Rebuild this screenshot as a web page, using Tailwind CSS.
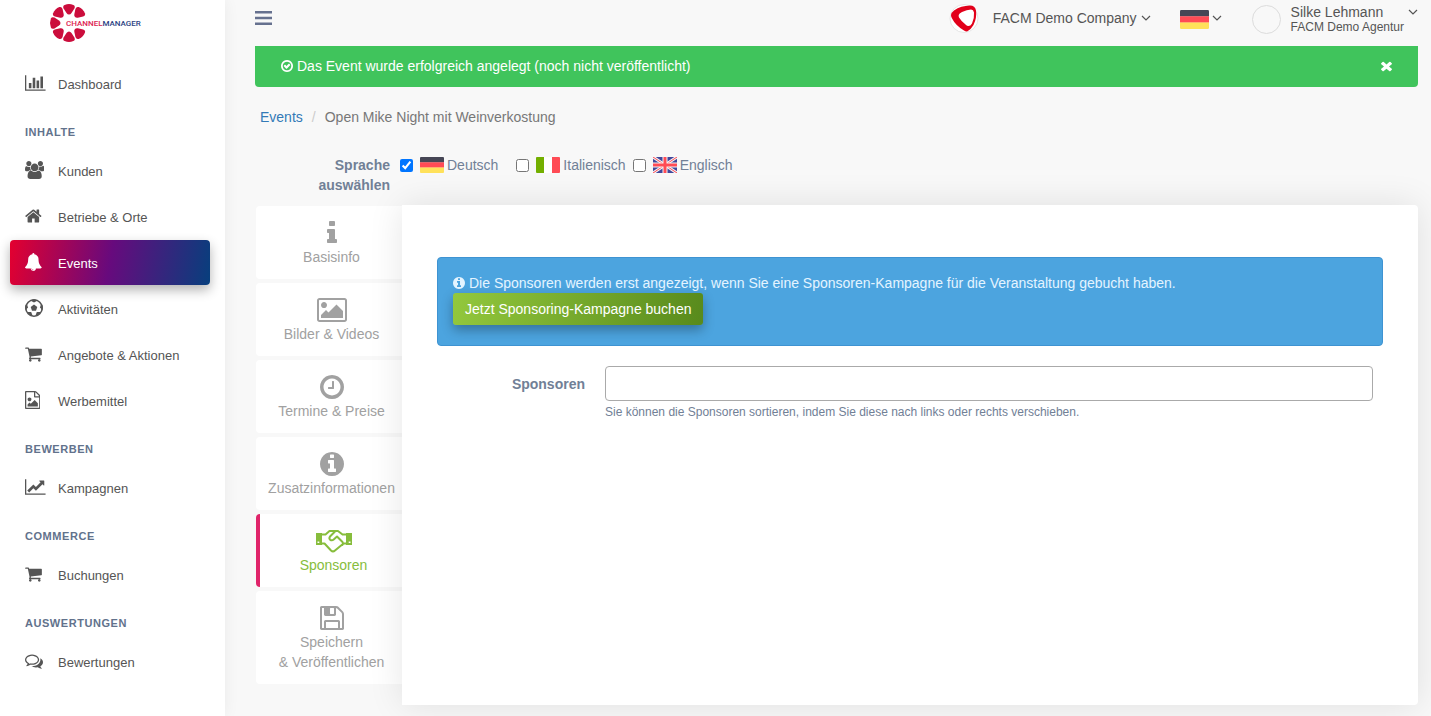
<!DOCTYPE html>
<html lang="de">

<head>
    <meta charset="UTF-8">
    <meta name="viewport" content="width=device-width, initial-scale=1.0">
    <title>Channelmanager - Event Sponsoren</title>
    <script src="https://cdn.jsdelivr.net/npm/@tailwindcss/browser@4"></script>
</head>

<body class="flex min-h-screen bg-[#f8f8f8] font-['Liberation_Sans',Arial,sans-serif] text-sm leading-5 text-[#555]">

    <!-- icons -->
    <svg class="hidden" xmlns="http://www.w3.org/2000/svg">
        <symbol id="i-cart" viewBox="64 0 1664 1792"><path d="M704 1536q0 52-38 90t-90 38-90-38-38-90 38-90 90-38 90 38 38 90zm896 0q0 52-38 90t-90 38-90-38-38-90 38-90 90-38 90 38 38 90zm128-1088v512q0 24-16.500 42.500t-40.500 21.500l-1044 122q13 60 13 70 0 16-24 64h920q26 0 45 19t19 45-19 45-45 19h-1024q-26 0-45-19t-19-45q0-11 8-31.500t16-36 21.500-40 15.500-29.500l-177-823h-204q-26 0-45-19t-19-45 19-45 45-19h256q16 0 28.500 6.500t19.500 15.500 13 24.500 8 26 5.500 29.500 4.500 26h1201q26 0 45 19t19 45z"/></symbol>
        <symbol id="i-info-circle" viewBox="128 0 1536 1792"><path d="M1152 1376v-160q0-14-9-23t-23-9h-96v-512q0-14-9-23t-23-9h-320q-14 0-23 9t-9 23v160q0 14 9 23t23 9h96v320h-96q-14 0-23 9t-9 23v160q0 14 9 23t23 9h448q14 0 23-9t9-23zm-128-896v-160q0-14-9-23t-23-9h-192q-14 0-23 9t-9 23v160q0 14 9 23t23 9h192q14 0 23-9t9-23zm640 416q0 209-103 385.500t-279.500 279.500-385.500 103-385.500-103-279.500-279.500-103-385.500 103-385.500 279.500-279.500 385.500-103 385.500 103 279.500 279.500 103 385.500z"/></symbol>
        <symbol id="i-chevron" viewBox="0 0 10 6"><path d="M1 1l4 4 4-4" fill="none" stroke="currentColor" stroke-width="1.200"/></symbol>
        <symbol id="i-flag-de" viewBox="0 0 24 16" preserveAspectRatio="none"><path fill="#464655" d="M0 1q0-1 1-1h22q1 0 1 1v4.400H0z"/><path fill="#ff4b55" d="M0 5.300h24v5.400H0z"/><path fill="#ffe15a" d="M0 10.600h24V15q0 1-1 1H1q-1 0-1-1z"/></symbol>
    </svg>

    <aside class="z-10 w-[225px] shrink-0 bg-white pl-[10px] pr-[15px] shadow-[0_0_15px_rgba(0,0,0,0.06)]">
        <a href="#" class="mb-[18px] ml-[39px] block h-[43px]" aria-label="Channelmanager">
            <svg class="h-[43px] w-[100px]" viewBox="0 0 100 43">
                <defs>
                    <path id="petal" d="M20 14.500q-1.500 0-2.500-1.500L14.600 8.500q-1.200-2.600 1-3.600 4.400-1.800 8.800 0 2.200 1 1 3.600L22.500 13q-1 1.500-2.500 1.500z"/>
                </defs>
                <g fill="#cb0d3c">
                    <use href="#petal"/>
                    <use href="#petal" transform="rotate(45 20 23)"/>
                    <use href="#petal" transform="rotate(135 20 23)"/>
                    <use href="#petal" transform="rotate(180 20 23)"/>
                    <use href="#petal" transform="rotate(225 20 23)"/>
                    <use href="#petal" transform="rotate(270 20 23)"/>
                    <use href="#petal" transform="rotate(315 20 23)"/>
                </g>
                <text x="17" y="26" class="font-[Roboto,sans-serif] text-[8px] font-medium" fill="#dc2350">CHANNEL<tspan fill="#2b4383">MANAGER</tspan></text>
            </svg>
        </a>
        <nav class="text-[13px]">
            <a href="#" class="mb-px flex h-[45px] items-center pl-[15px] pt-[2px]">
                <span class="mb-1 w-[33px]"><svg class="h-[18px] fill-current" viewBox="0 0 2048 1792"><path d="M640 896v512h-256v-512h256zm384-512v1024h-256v-1024h256zm1024 1152v128h-2048v-1536h128v1408h1920zm-640-896v768h-256v-768h256zm384-384v1152h-256v-1152h256z"/></svg></span>
                Dashboard
            </a>
            <h3 class="h-[41px] pl-[15px] pt-[17px] text-[11px] font-bold leading-4 tracking-wider text-[#62728c]">INHALTE</h3>
            <a href="#" class="mb-px flex h-[45px] items-center pl-[15px] pt-[2px]">
                <span class="mb-1 w-[33px]"><svg class="h-[18px] fill-current" viewBox="0 0 1920 1792"><path d="M593 896q-162 5-265 128h-134q-82 0-138-40.500t-56-118.500q0-353 124-353 6 0 43.500 21t97.500 42.500 119 21.500q67 0 133-23-5 37-5 66 0 159 93 293zm1071 637q0 120-73 189.500t-194 69.500h-874q-121 0-194-69.500t-73-189.500q0-53 3.500-103.500t14-109 26.500-108.500 43-97.500 62-81 85.500-53.500 111.500-20q10 0 43 21.500t73 48 107 48 135 21.500 135-21.500 107-48 73-48 43-21.500q61 0 111.500 20t85.500 53.500 62 81 43 97.500 26.500 108.500 14 109 3.500 103.500zm-1024-1277q0 106-75 181t-181 75-181-75-75-181 75-181 181-75 181 75 75 181zm704 384q0 159-112.500 271.500t-271.500 112.500-271.500-112.500-112.500-271.500 112.500-271.500 271.500-112.500 271.500 112.500 112.500 271.500zm576 225q0 78-56 118.500t-138 40.500h-134q-103-123-265-128 93-134 93-293 0-29-5-66 66 23 133 23 59 0 119-21.500t97.500-42.500 43.500-21q124 0 124 353zm-128-609q0 106-75 181t-181 75-181-75-75-181 75-181 181-75 181 75 75 181z"/></svg></span>
                Kunden
            </a>
            <a href="#" class="mb-px flex h-[45px] items-center pl-[15px] pt-[2px]">
                <span class="mb-1 w-[33px]"><svg class="h-[18px] fill-current" viewBox="64 0 1664 1792"><path d="M1472 992v480q0 26-19 45t-45 19h-384v-384h-256v384h-384q-26 0-45-19t-19-45v-480q0-1 .5-3t.5-3l575-474 575 474q1 2 1 6zm223-69l-62 74q-8 9-21 11h-3q-13 0-21-7l-692-577-692 577q-12 8-24 7-13-2-21-11l-62-74q-8-10-7-23.500t11-21.500l719-599q32-26 76-26t76 26l244 204v-195q0-14 9-23t23-9h192q14 0 23 9t9 23v408l219 182q10 8 11 21.500t-7 23.500z"/></svg></span>
                Betriebe &amp; Orte
            </a>
            <a href="#" class="mb-px flex h-[45px] items-center rounded bg-linear-[100deg,#e4002f,#670a7d_50%,#073f7d] pl-[15px] pt-[2px] text-white shadow-[0_5px_12px_rgba(0,0,0,0.3)]">
                <span class="mb-1 w-[33px]"><svg class="h-[18px] fill-current" viewBox="64 0 1664 1792"><path d="M912 1696q0-16-16-16-59 0-101.500-42.500t-42.500-101.500q0-16-16-16t-16 16q0 73 51.500 124.500t124.500 51.500q16 0 16-16zm816-288q0 52-38 90t-90 38h-448q0 106-75 181t-181 75-181-75-75-181h-448q-52 0-90-38t-38-90q50-42 91-88t85-119.500 74.500-158.500 50-206 19.500-260q0-152 117-282.500t307-158.500q-8-19-8-39 0-40 28-68t68-28 68 28 28 68q0 20-8 39 190 28 307 158.500t117 282.500q0 139 19.500 260t50 206 74.500 158.500 85 119.500 91 88z"/></svg></span>
                Events
            </a>
            <a href="#" class="mb-px flex h-[45px] items-center pl-[15px] pt-[2px]">
                <span class="mb-1 w-[33px]"><svg class="h-[18px] fill-current" viewBox="0 0 18 18"><circle cx="9" cy="9" r="8.200" fill="none" stroke="currentColor" stroke-width="1.600"/><path d="M9 5.600l3.300 2.400-1.300 3.800H7L5.700 8zM5.200 1.600L9 3.600l3.800-2L10.500.5h-3zM16.400 4.400l-1.500 4.200 2.700 2.600.2-4zM1.600 4.400l1.500 4.200-2.700 2.600-.2-4zM16 12.900l-4.200.2-1.500 3.900 3.300-.8zM2 12.900l4.200.2 1.500 3.900-3.300-.8z"/></svg></span>
                Aktivitäten
            </a>
            <a href="#" class="mb-px flex h-[45px] items-center pl-[15px] pt-[2px]">
                <span class="mb-1 w-[33px]"><svg class="h-[18px] w-[17px] fill-current"><use href="#i-cart"/></svg></span>
                Angebote &amp; Aktionen
            </a>
            <a href="#" class="mb-px flex h-[45px] items-center pl-[15px] pt-[2px]">
                <span class="mb-1 w-[33px]"><svg class="h-[18px] fill-current" viewBox="128 0 1536 1792"><path d="M1596 380q28 28 48 76t20 88v1152q0 40-28 68t-68 28h-1344q-40 0-68-28t-28-68v-1600q0-40 28-68t68-28h896q40 0 88 20t76 48zm-444-244v376h376q-10-29-22-41l-313-313q-12-12-41-22zm384 1528v-1024h-416q-40 0-68-28t-28-68v-416h-768v1536h1280zm-128-448v320h-1024v-192l192-192 128 128 384-384zm-832-192q-80 0-136-56t-56-136 56-136 136-56 136 56 56 136-56 136-136 56z"/></svg></span>
                Werbemittel
            </a>
            <h3 class="h-[41px] pl-[15px] pt-[17px] text-[11px] font-bold leading-4 tracking-wider text-[#62728c]">BEWERBEN</h3>
            <a href="#" class="mb-px flex h-[45px] items-center pl-[15px] pt-[2px]">
                <span class="mb-1 w-[33px]"><svg class="h-[18px] fill-current" viewBox="0 0 2048 1792"><path d="M2048 1536v128h-2048v-1536h128v1408h1920zm-128-1248v435q0 21-19.500 29.500t-35.500-7.500l-121-121-633 633q-10 10-23 10t-23-10l-233-233-416 416-192-192 585-585q10-10 23-10t23 10l233 233 464-464-121-121q-16-16-7.500-35.500t29.500-19.500h435q14 0 23 9t9 23z"/></svg></span>
                Kampagnen
            </a>
            <h3 class="h-[41px] pl-[15px] pt-[17px] text-[11px] font-bold leading-4 tracking-wider text-[#62728c]">COMMERCE</h3>
            <a href="#" class="mb-px flex h-[45px] items-center pl-[15px] pt-[2px]">
                <span class="mb-1 w-[33px]"><svg class="h-[18px] w-[17px] fill-current"><use href="#i-cart"/></svg></span>
                Buchungen
            </a>
            <h3 class="h-[41px] pl-[15px] pt-[17px] text-[11px] font-bold leading-4 tracking-wider text-[#62728c]">AUSWERTUNGEN</h3>
            <a href="#" class="mb-px flex h-[45px] items-center pl-[15px] pt-[2px]">
                <span class="mb-1 w-[33px]"><svg class="h-[18px] fill-current" viewBox="0 0 1792 1792"><path d="M704 384q-153 0-286 52t-211.500 141-78.500 191q0 82 53 158t149 132l97 56-35 84q34-20 62-39l44-31 53 10q78 14 153 14 153 0 286-52t211.500-141 78.500-191-78.500-191-211.500-141-286-52zm0-128q191 0 353.500 68.500t256.500 186.500 94 257-94 257-256.500 186.500-353.500 68.500q-86 0-176-16-124 88-278 128-36 9-86 16h-3q-11 0-20.500-8t-11.500-21q-1-3-1-6.500t.5-6.500 2-6l2.500-5 3.500-5.500 4-5 4.500-5 4-4.500q5-6 23-25t26-29.500 22.500-29 25-38.500 20.500-44q-124-72-195-177t-71-224q0-139 94-257t256.500-186.500 353.500-68.500zm822 1169q10 24 20.500 44t25 38.500 22.500 29 26 29.500 23 25q1 1 4 4.500t4.500 5 4 5 3.500 5.500l2.500 5 2 6 .5 6.500-1 6.500q-3 14-13 22t-22 7q-50-7-86-16-154-40-278-128-90 16-176 16-271 0-472-132 58 4 88 4 161 0 309-45t264-129q125-92 192-212t67-254q0-77-23-152 129 71 204 178t75 230q0 120-71 224.500t-195 176.500z"/></svg></span>
                Bewertungen
            </a>
        </nav>
    </aside>

    <div class="min-w-0 flex-1 pb-[11px] pl-[30px] pr-[13px]">
        <header class="flex h-[46px] items-start">
            <button type="button" class="mt-[11px] text-[#66718f]" aria-label="Menü">
                <svg class="h-[14px] w-[17px] fill-current" viewBox="0 0 17 14"><path d="M0 0h17v2.600H0zM0 5.700h17v2.600H0zM0 11.400h17V14H0z"/></svg>
            </button>
            <button type="button" class="ml-auto flex h-[36px] items-center">
                <svg class="mr-[14px] size-[30px]" viewBox="0 0 30 30">
                    <circle cx="15" cy="15.500" r="14" fill="#fff" stroke="#e6e6e6"/>
                    <path fill="#e2001a" d="M2 12Q2.300 9.500 5 7.500Q12 2.800 21 2.600Q26 2.600 27 7.500Q28 15 24.500 22Q21.500 27 18.500 28.300Q17 28.800 15 27.500Q6.500 22.500 2.800 15Q2 13.500 2 12z"/>
                    <path fill="#fff" d="M9.700 12Q10 10.500 13 9Q18 6.500 22 6.500Q24.500 6.700 25 9.500Q25.500 15.500 23 20.500Q21.500 23 19.500 23Q18 23 16.500 21.500Q12.500 18.500 10 14.500Q9.500 13 9.700 12z"/>
                </svg>
                FACM Demo Company
                <svg class="ml-1 h-[6px] w-[10px]"><use href="#i-chevron"/></svg>
            </button>
            <button type="button" class="ml-[29px] flex h-[36px] items-center" aria-label="Sprache">
                <svg class="mt-[2px] h-[19px] w-[29px]"><use href="#i-flag-de"/></svg>
                <svg class="ml-[3px] h-[6px] w-[10px]"><use href="#i-chevron"/></svg>
            </button>
            <button type="button" class="ml-[30px] flex items-start text-left">
                <span class="mr-[10px] mt-[5px] size-[29px] rounded-full border border-[#dcdcdc]"></span>
                <span class="pt-1">
                    <span class="block leading-4">Silke Lehmann</span>
                    <span class="block text-xs leading-[14px]">FACM Demo Agentur</span>
                </span>
                <svg class="ml-1 mt-[9px] h-[6px] w-[10px]"><use href="#i-chevron"/></svg>
            </button>
        </header>

        <main>
            <div role="alert" class="flex h-[41px] items-center rounded-b bg-[#40c45c] px-[26px] pb-[2px] text-white">
                <svg class="mr-1 h-[14px] w-[12px] fill-current" viewBox="128 0 1536 1792"><path d="M1299 813l-422 422q-19 19-45 19t-45-19l-294-294q-19-19-19-45t19-45l102-102q19-19 45-19t45 19l147 147 275-275q19-19 45-19t45 19l102 102q19 19 19 45t-19 45zm141 83q0-148-73-273t-198-198-273-73-273 73-198 198-73 273 73 273 198 198 273 73 273-73 198-198 73-273zm224 0q0 209-103 385.500t-279.500 279.500-385.500 103-385.500-103-279.500-279.500-103-385.500 103-385.500 279.500-279.500 385.500-103 385.500 103 279.500 279.500 103 385.500z"/></svg>
                Das Event wurde erfolgreich angelegt (noch nicht veröffentlicht)
                <button type="button" class="ml-auto" aria-label="Schließen">
                    <svg class="h-[14px] w-[11px] fill-current" viewBox="302 0 1188 1792" preserveAspectRatio="none"><path d="M1490 1322q0 40-28 68l-136 136q-28 28-68 28t-68-28l-294-294-294 294q-28 28-68 28t-68-28l-136-136q-28-28-28-68t28-68l294-294-294-294q-28-28-28-68t28-68l136-136q28-28 68-28t68 28l294 294 294-294q28-28 68-28t68 28l136 136q28 28 28 68t-28 68l-294 294 294 294q28 28 28 68z"/></svg>
                </button>
            </div>

            <ol class="flex px-[5px] py-5 text-[#777]">
                <li><a href="#" class="text-[#337ab7]">Events</a></li>
                <li class="px-[9px] text-[#ccc]">/</li>
                <li>Open Mike Night mit Weinverkostung</li>
            </ol>

            <fieldset class="mt-2 flex text-[#718096]">
                <legend class="float-left w-[135px] pl-5 text-right font-bold">Sprache auswählen</legend>
                <div class="ml-[10px] flex h-5 items-center">
                    <input type="checkbox" id="lang-de" checked class="mr-[7px] size-[13px]">
                    <label for="lang-de" class="mr-[18px] flex items-center gap-[3px]"><svg class="h-[16px] w-[24px]"><use href="#i-flag-de"/></svg>Deutsch</label>
                    <input type="checkbox" id="lang-it" class="mr-[7px] size-[13px]">
                    <label for="lang-it" class="mr-[7px] flex items-center gap-[3px]"><svg class="h-[16px] w-[24px]" viewBox="0 0 24 16"><path fill="#fff" d="M8 0h8v16H8z"/><path fill="#73af00" d="M8 0v16H1q-1 0-1-1V1q0-1 1-1z"/><path fill="#ff4b55" d="M16 0v16h7q1 0 1-1V1q0-1-1-1z"/></svg>Italienisch</label>
                    <input type="checkbox" id="lang-en" class="mr-[7px] size-[13px]">
                    <label for="lang-en" class="flex items-center gap-[3px]"><svg class="h-[16px] w-[24px]" viewBox="0 0 24 16"><rect width="24" height="16" rx="1" fill="#41479b"/><path d="M0 0l24 16M24 0L0 16" stroke="#f5f5f5" stroke-width="3"/><path d="M0 0l24 16M24 0L0 16" stroke="#ff4b55" stroke-width="1"/><path d="M12 0v16M0 8h24" stroke="#f5f5f5" stroke-width="5"/><path d="M12 0v16M0 8h24" stroke="#ff4b55" stroke-width="3"/></svg>Englisch</label>
                </div>
            </fieldset>

            <div class="mt-[10px] flex items-stretch">
                <nav class="ml-px mt-px flex w-[146px] shrink-0 flex-col gap-1 text-center text-[#a1a1a1]">
                    <a href="#" class="rounded-l bg-white pb-3 pl-[5px] pt-[13px]">
                        <svg class="mx-auto h-[28px] fill-current" viewBox="576 0 640 1792"><path d="M1216 1344v128q0 26-19 45t-45 19h-512q-26 0-45-19t-19-45v-128q0-26 19-45t45-19h64v-384h-64q-26 0-45-19t-19-45v-128q0-26 19-45t45-19h384q26 0 45 19t19 45v576h64q26 0 45 19t19 45zm-128-1152v192q0 26-19 45t-45 19h-256q-26 0-45-19t-19-45v-192q0-26 19-45t45-19h256q26 0 45 19t19 45z"/></svg>
                        Basisinfo
                    </a>
                    <a href="#" class="rounded-l bg-white pb-3 pl-[5px] pt-[13px]">
                        <svg class="mx-auto h-[28px] fill-current" viewBox="-64 0 1920 1792"><path d="M576 576q0 80-56 136t-136 56-136-56-56-136 56-136 136-56 136 56 56 136zm1024 384v448h-1408v-192l320-320 160 160 512-512zm96-704h-1600q-13 0-22.500 9.500t-9.500 22.500v1216q0 13 9.500 22.500t22.500 9.500h1600q13 0 22.500-9.500t9.500-22.500v-1216q0-13-9.500-22.500t-22.500-9.500zm160 32v1216q0 66-47 113t-113 47h-1600q-66 0-113-47t-47-113v-1216q0-66 47-113t113-47h1600q66 0 113 47t47 113z"/></svg>
                        Bilder &amp; Videos
                    </a>
                    <a href="#" class="rounded-l bg-white pb-3 pl-[5px] pt-[13px]">
                        <svg class="mx-auto h-[28px] fill-current" viewBox="128 0 1536 1792"><path d="M1024 544v448q0 14-9 23t-23 9h-320q-14 0-23-9t-9-23v-64q0-14 9-23t23-9h224v-352q0-14 9-23t23-9h64q14 0 23 9t9 23zm416 352q0-148-73-273t-198-198-273-73-273 73-198 198-73 273 73 273 198 198 273 73 273-73 198-198 73-273zm224 0q0 209-103 385.500t-279.500 279.500-385.500 103-385.500-103-279.500-279.500-103-385.500 103-385.500 279.500-279.500 385.500-103 385.500 103 279.500 279.500 103 385.500z"/></svg>
                        Termine &amp; Preise
                    </a>
                    <a href="#" class="rounded-l bg-white pb-3 pl-[5px] pt-[13px]">
                        <svg class="mx-auto h-[28px] w-[24px] fill-current"><use href="#i-info-circle"/></svg>
                        Zusatzinformationen
                    </a>
                    <a href="#" class="rounded-l border-l-4 border-[#e0246a] bg-white pb-3 pl-[5px] pt-[13px] text-[#87bd3c]">
                        <svg class="mx-auto h-[28px] w-[38px]" viewBox="0 0 38 28">
                            <path fill="currentColor" fill-rule="evenodd" d="M1 6h6v12H1zM2.500 14.500v1.600h1.800v-1.600zM31 6h6v12h-6zM33.700 14.500v1.600h1.800v-1.600z"/>
                            <path fill="none" stroke="currentColor" stroke-width="2" stroke-linejoin="round" stroke-linecap="round" d="M7 7.500h3.500l4-3.500h8.500l4.500 3.500H31M7 16.500h2.500l6.500 7q2 1.800 4 0l8.500-7H31M20.500 4L15 9.500q-1.300 2 .2 3.300 1.800 1.200 3.500-.3l3.300-3 5.500 5.500q1.200 1.700-.2 3"/>
                        </svg>
                        Sponsoren
                    </a>
                    <a href="#" class="rounded-l bg-white pb-3 pl-[5px] pt-[13px]">
                        <svg class="mx-auto h-[28px] fill-current" viewBox="128 0 1536 1792"><path d="M512 1536h768v-384h-768v384zm896 0h128v-896q0-14-10-38.500t-20-34.500l-281-281q-10-10-34-20t-39-10v416q0 40-28 68t-68 28h-576q-40 0-68-28t-28-68v-416h-128v1280h128v-416q0-40 28-68t68-28h832q40 0 68 28t28 68v416zm-384-928v-320q0-13-9.500-22.500t-22.500-9.500h-192q-13 0-22.500 9.500t-9.500 22.500v320q0 13 9.500 22.500t22.500 9.500h192q13 0 22.500-9.500t9.500-22.500zm640 32v928q0 40-28 68t-68 28h-1344q-40 0-68-28t-28-68v-1344q0-40 28-68t68-28h928q40 0 88 20t76 48l280 280q28 28 48 76t20 88z"/></svg>
                        Speichern<br>&amp; Veröffentlichen
                    </a>
                </nav>

                <section class="relative min-h-[500px] min-w-0 flex-1 rounded-r bg-white px-[35px] pt-[52px] shadow-[0_0_35px_rgba(0,0,0,0.1)]">
                    <div class="rounded border border-[#3e93d2] bg-[#4ca4df] px-[15px] pb-5 pt-[15px] text-[#e4f4ff]">
                        <p class="flex items-center gap-1"><svg class="h-[14px] w-[12px] fill-current"><use href="#i-info-circle"/></svg>Die Sponsoren werden erst angezeigt, wenn Sie eine Sponsoren-Kampagne für die Veranstaltung gebucht haben.</p>
                        <button type="button" class="block h-[32px] rounded-[3px] bg-linear-[100deg,#93c83d,#588a1c] px-3 text-white shadow-[0_5px_12px_rgba(0,0,0,0.3)]">Jetzt Sponsoring-Kampagne buchen</button>
                    </div>
                    <form class="mt-5 flex pr-[10px] text-[#718096]">
                        <label for="sponsors" class="mr-5 w-[148px] shrink-0 pt-2 text-right font-bold">Sponsoren</label>
                        <div class="flex-1">
                            <input type="text" id="sponsors" class="block h-[35px] w-full rounded border border-[#aaa] bg-white px-3 outline-none">
                            <p class="mt-[2px] text-xs leading-[18px]">Sie können die Sponsoren sortieren, indem Sie diese nach links oder rechts verschieben.</p>
                        </div>
                    </form>
                </section>
            </div>
        </main>
    </div>

</body>

</html>
